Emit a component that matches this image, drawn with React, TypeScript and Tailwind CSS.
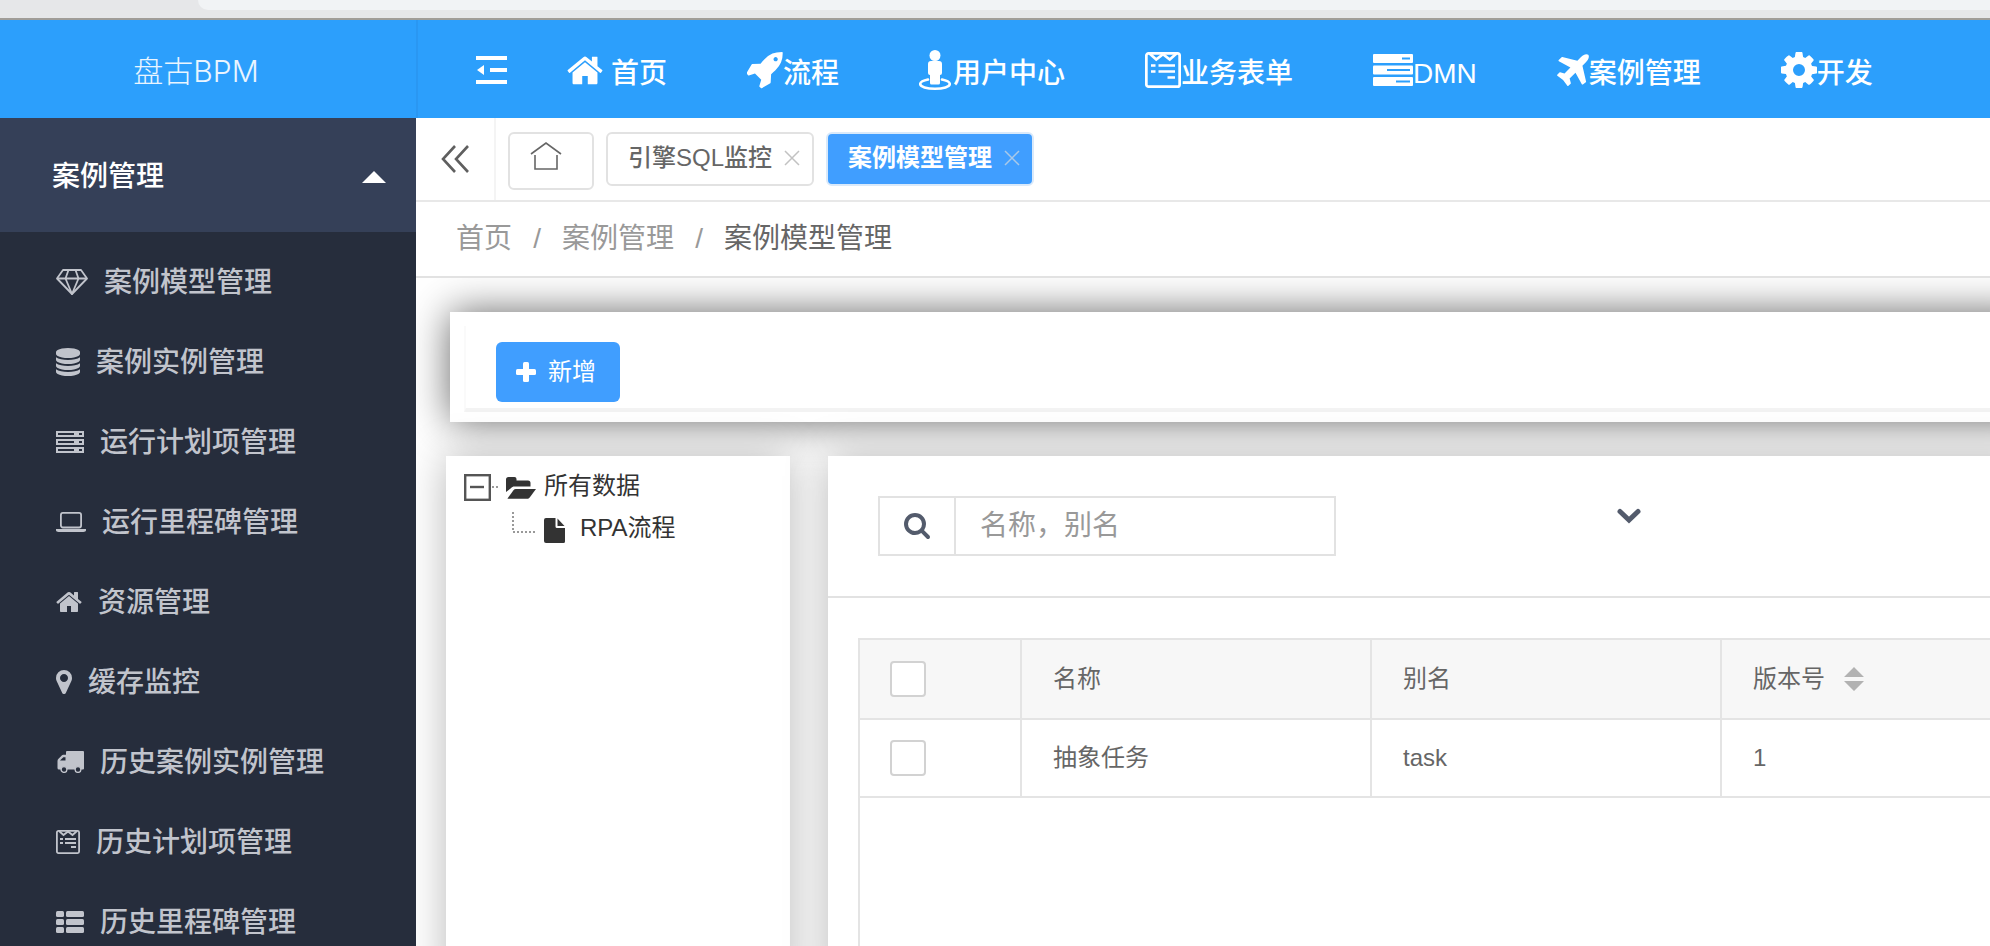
import { useState } from 'react'
import type { ReactNode } from 'react'

const HOME_PATH =
  'M1472 992v480q0 26-19 45t-45 19h-384v-384h-256v384h-384q-26 0-45-19t-19-45v-480q0-1 .5-3t.5-3l575-474 575 474q1 2 1 6zm223-69l-62 74q-8 9-21 11h-3q-13 0-21-7l-692-577-692 577q-12 8-24 7-13-2-21-11l-62-74q-8-10-7-23.5t11-21.5l719-599q32-26 76-26t76 26l244 204v-195q0-14 9-23t23-9h192q14 0 23 9t9 23v408l219 182q10 8 11 21.5t-7 23.5z'

interface IconProps {
  className?: string
}

function HomeIcon({ className }: IconProps) {
  return (
    <svg className={className} viewBox="64 256 1664 1280" fill="currentColor" aria-hidden="true">
      <path d={HOME_PATH} />
    </svg>
  )
}

function RocketIcon({ className }: IconProps) {
  return (
    <svg className={className} viewBox="62 126 1604 1668" fill="currentColor" aria-hidden="true">
      <path d="M1440 448q0-40-28-68t-68-28-68 28-28 68 28 68 68 28 68-28 28-68zm224-288q0 249-75.5 430.5t-253.5 360.5q-81 80-195 176l-20 379q-2 16-16 26l-384 224q-7 4-16 4-12 0-23-9l-64-64q-13-14-8-32l85-276-281-281-276 85q-3 1-9 1-14 0-23-9l-64-64q-17-19-5-39l224-384q10-14 26-16l379-20q96-114 176-195 188-187 358-258t431-71q14 0 24 9.5t10 22.5z" />
    </svg>
  )
}

function PersonIcon({ className }: IconProps) {
  return (
    <svg className={className} viewBox="0 0 32 40" fill="currentColor" aria-hidden="true">
      <circle cx="16" cy="5.5" r="5.5" />
      <path d="M12 11h8a3 3 0 0 1 3 3v9a2 2 0 0 1-2 2v8a1.5 1.5 0 0 1-1.500 1.500h-7A1.500 1.500 0 0 1 11 33v-8a2 2 0 0 1-2-2v-9a3 3 0 0 1 3-3z" />
      <path d="M9 29.500C4 30.500 1.200 32 1.200 34c0 2.800 6.500 4.700 14.800 4.700s14.800-1.900 14.800-4.700c0-2-2.800-3.500-7.800-4.500" fill="none" stroke="currentColor" strokeWidth="2.600" strokeLinecap="round" />
    </svg>
  )
}

function FormIcon({ className }: IconProps) {
  return (
    <svg className={className} viewBox="0 0 24 24" fill="none" stroke="currentColor" strokeWidth="1.800" aria-hidden="true">
      <rect x="0.900" y="0.900" width="22.200" height="22.200" rx="1.500" />
      <path d="M3 1l4.500 4L12 1.500 16.500 5 21 1" />
      <path d="M4 9h3M9 9h11M4 13h3M9 13h11M15 17h5" />
    </svg>
  )
}

function ServerIcon({ className }: IconProps) {
  return (
    <svg className={className} viewBox="0 0 40 32" aria-hidden="true">
      <g fill="currentColor">
        <rect width="40" height="9" rx="1" />
        <rect y="11.500" width="40" height="9" rx="1" />
        <rect y="23" width="40" height="9" rx="1" />
      </g>
      <g className="fill-[#2c9ffc]">
        <rect x="29" y="3.500" width="8" height="2" />
        <rect x="14" y="15" width="23" height="2" />
        <rect x="23" y="26.500" width="14" height="2" />
      </g>
    </svg>
  )
}

function PlaneIcon({ className }: IconProps) {
  return (
    <svg className={className} viewBox="190 124 1410 1410" fill="currentColor" aria-hidden="true">
      <path d="M1568 160q44 52 12 148t-108 172l-161 161 160 696q5 19-12 33l-128 96q-7 6-19 6-4 0-7-1-15-3-21-16l-279-508-259 259 53 194q5 17-8 31l-96 96q-9 9-23 9h-2q-15-2-24-13l-189-252-252-189q-11-7-13-23-1-13 9-25l96-97q9-9 23-9 6 0 8 1l194 53 259-259-508-279q-14-8-17-24-2-16 9-27l128-128q14-13 30-8l665 159 160-160q76-76 172-108t148 12z" />
    </svg>
  )
}

function GearIcon({ className }: IconProps) {
  return (
    <svg className={className} viewBox="128 128 1536 1536" fill="currentColor" aria-hidden="true">
      <path d="M1152 896q0-106-75-181t-181-75-181 75-75 181 75 181 181 75 181-75 75-181zm512-109v222q0 12-8 23t-20 13l-185 28q-19 54-39 91 35 50 107 138 10 12 10 25t-9 23q-27 37-99 108t-94 71q-12 0-26-9l-138-108q-44 23-91 38-16 136-29 186-7 28-36 28h-222q-14 0-24.5-8.5t-11.5-21.5l-28-184q-49-16-90-37l-141 107q-10 9-25 9-14 0-25-11-126-114-165-168-7-10-7-23 0-12 8-23 15-21 51-66.5t54-70.5q-27-50-41-99l-183-27q-13-2-21-12.5t-8-23.5v-222q0-12 8-23t19-13l186-28q14-46 39-92-40-57-107-138-10-12-10-24 0-10 9-23 26-36 98.5-107.5t94.5-71.5q13 0 26 10l138 107q44-23 91-38 16-136 29-186 7-28 36-28h222q14 0 24.5 8.500t11.500 21.500l28 184q49 16 90 37l142-107q9-9 24-9 13 0 25 10 129 119 165 170 7 8 7 22 0 12-8 23-15 21-51 66.5t-54 70.5q26 50 41 98l183 28q13 2 21 12.5t8 23.5z" />
    </svg>
  )
}

function DiamondIcon({ className }: IconProps) {
  return (
    <svg className={className} viewBox="0 0 32 26" fill="none" stroke="currentColor" strokeWidth="1.800" strokeLinejoin="round" aria-hidden="true">
      <path d="M7 1h18l6 8.500L16 25 1 9.500z" />
      <path d="M1 9.500h30M12.500 1L9.500 9.500 16 25l6.500-15.500L19.500 1" />
    </svg>
  )
}

function DatabaseIcon({ className }: IconProps) {
  return (
    <svg className={className} viewBox="128 0 1536 1792" fill="currentColor" aria-hidden="true">
      <path d="M896 768q237 0 443-43t325-127v170q0 69-103 128t-280 93.5-385 34.5-385-34.5-280-93.5-103-128v-170q119 84 325 127t443 43zm0 768q237 0 443-43t325-127v170q0 69-103 128t-280 93.5-385 34.5-385-34.5-280-93.5-103-128v-170q119 84 325 127t443 43zm0-384q237 0 443-43t325-127v170q0 69-103 128t-280 93.5-385 34.5-385-34.5-280-93.5-103-128v-170q119 84 325 127t443 43zm0-1152q208 0 385 34.5t280 93.5 103 128v128q0 69-103 128t-280 93.5-385 34.5-385-34.5-280-93.5-103-128v-128q0-69 103-128t280-93.5 385-34.5z" />
    </svg>
  )
}

function RackIcon({ className }: IconProps) {
  return (
    <svg className={className} viewBox="0 0 28 22" aria-hidden="true">
      <g fill="currentColor">
        <rect width="28" height="6" />
        <rect y="8" width="28" height="6" />
        <rect y="16" width="28" height="6" />
      </g>
      <g className="fill-[#262d3c]">
        <rect x="2" y="2" width="16" height="2" />
        <rect x="2" y="10" width="16" height="2" />
        <rect x="2" y="18" width="16" height="2" />
        <rect x="23" y="2" width="3" height="2" />
        <rect x="23" y="10" width="3" height="2" />
        <rect x="23" y="18" width="3" height="2" />
      </g>
    </svg>
  )
}

function LaptopIcon({ className }: IconProps) {
  return (
    <svg className={className} viewBox="0 0 30 20" aria-hidden="true">
      <rect x="4.900" y="0.900" width="20.200" height="14.600" rx="2" fill="none" stroke="currentColor" strokeWidth="1.800" />
      <path d="M0 17h30v1.300c0 1-1.200 1.700-2.600 1.700H2.600C1.200 20 0 19.300 0 18.300z" fill="currentColor" />
    </svg>
  )
}

function MarkerIcon({ className }: IconProps) {
  return (
    <svg className={className} viewBox="384 128 1024 1536" fill="currentColor" aria-hidden="true">
      <path d="M1152 640q0-106-75-181t-181-75-181 75-75 181 75 181 181 75 181-75 75-181zm256 0q0 109-33 179l-364 774q-16 33-47.5 52t-67.5 19-67.5-19-46.5-52l-365-774q-33-70-33-179 0-212 150-362t362-150 362 150 150 362z" />
    </svg>
  )
}

function TruckIcon({ className }: IconProps) {
  return (
    <svg className={className} viewBox="0 0 28 22" aria-hidden="true">
      <path d="M11 0h16a1 1 0 0 1 1 1v16.500a1 1 0 0 1-1 1H3a1.500 1.500 0 0 1-1.500-1.500v-7c0-1 .3-1.600 1-2.300l3-3C6.200 4 6.800 3.800 7.800 3.800H10V1a1 1 0 0 1 1-1z" fill="currentColor" />
      <path d="M4 9.500L7.300 6.200H9.500v3.300z" className="fill-[#262d3c]" />
      <circle cx="8" cy="18.500" r="2.900" className="fill-[#262d3c]" stroke="currentColor" strokeWidth="1.400" />
      <circle cx="22" cy="18.500" r="2.900" className="fill-[#262d3c]" stroke="currentColor" strokeWidth="1.400" />
    </svg>
  )
}

function ThListIcon({ className }: IconProps) {
  return (
    <svg className={className} viewBox="0 0 28 22" fill="currentColor" aria-hidden="true">
      <rect width="8" height="6" rx="1.500" />
      <rect y="8" width="8" height="6" rx="1.500" />
      <rect y="16" width="8" height="6" rx="1.500" />
      <rect x="10" width="18" height="6" rx="1.500" />
      <rect x="10" y="8" width="18" height="6" rx="1.500" />
      <rect x="10" y="16" width="18" height="6" rx="1.500" />
    </svg>
  )
}

function CloseIcon({ className }: IconProps) {
  return (
    <svg className={className} viewBox="0 0 16 16" fill="none" stroke="currentColor" strokeWidth="1.500" aria-hidden="true">
      <path d="M1 1l14 14M15 1L1 15" />
    </svg>
  )
}

interface MenuItem {
  label: string
  icon: ReactNode
}

const topMenus: MenuItem[] = [
  { label: '首页', icon: <HomeIcon className="mr-2 h-[29px] w-9" /> },
  { label: '流程', icon: <RocketIcon className="h-[37px] w-9" /> },
  { label: '用户中心', icon: <PersonIcon className="mr-0.5 h-10 w-8" /> },
  { label: '业务表单', icon: <FormIcon className="size-9" /> },
  { label: 'DMN', icon: <ServerIcon className="h-8 w-10" /> },
  { label: '案例管理', icon: <PlaneIcon className="size-8" /> },
  { label: '开发', icon: <GearIcon className="size-9" /> },
]

const sideMenus: MenuItem[] = [
  { label: '案例模型管理', icon: <DiamondIcon className="h-[26px] w-8" /> },
  { label: '案例实例管理', icon: <DatabaseIcon className="h-7 w-6" /> },
  { label: '运行计划项管理', icon: <RackIcon className="h-[22px] w-7" /> },
  { label: '运行里程碑管理', icon: <LaptopIcon className="h-5 w-[30px]" /> },
  { label: '资源管理', icon: <HomeIcon className="h-5 w-[26px]" /> },
  { label: '缓存监控', icon: <MarkerIcon className="h-6 w-4" /> },
  { label: '历史案例实例管理', icon: <TruckIcon className="h-[22px] w-7" /> },
  { label: '历史计划项管理', icon: <FormIcon className="size-6" /> },
  { label: '历史里程碑管理', icon: <ThListIcon className="h-[22px] w-7" /> },
]

const rows = [{ name: '抽象任务', alias: 'task', version: 1 }]

const checkboxClass = 'block size-9 appearance-none rounded border-2 border-[#d2d2d2] bg-white checked:border-[#409eff] checked:bg-[#409eff]'

function TopBar() {
  return (
    <header className="flex h-[98px] shrink-0 bg-[#2c9ffc] text-white">
      <div className="flex w-[418px] shrink-0 items-center justify-center border-r-2 border-[#2a97f2] pt-1 pr-6 font-['Inter','Noto_Sans_CJK_SC',sans-serif] text-[30px] font-light text-white/90">
        盘古BPM
      </div>
      <nav className="flex flex-1 items-center pt-0.5 pl-[58px]">
        <button type="button" className="mr-[60px] shrink-0" aria-label="收起菜单">
          <svg className="h-7 w-[31px]" viewBox="0 0 31 28" fill="currentColor" aria-hidden="true">
            <rect width="31" height="4" />
            <rect x="14" y="12" width="17" height="4" />
            <rect y="24" width="31" height="4" />
            <path d="M1 14l7-5v10z" />
          </svg>
        </button>
        <ul className="flex gap-20">
          {topMenus.map((menu) => (
            <li key={menu.label}>
              <a href="#" className="flex items-center whitespace-nowrap text-[28px] leading-10 font-medium">
                {menu.icon}
                <span className="pt-2">{menu.label}</span>
              </a>
            </li>
          ))}
        </ul>
      </nav>
    </header>
  )
}

function SideBar() {
  return (
    <aside className="w-[416px] shrink-0 overflow-hidden bg-[#262d3c]">
      <button type="button" className="flex h-[114px] w-full items-center justify-between bg-[#354058] pt-1 pr-[30px] pl-[52px] text-[28px] font-medium text-white">
        案例管理
        <svg className="h-3 w-6" viewBox="0 0 24 12" fill="currentColor" aria-hidden="true">
          <path d="M12 0l12 12H0z" />
        </svg>
      </button>
      <ul className="pt-2.5">
        {sideMenus.map((menu) => (
          <li key={menu.label}>
            <a href="#" className="flex h-20 items-center gap-4 pl-14 text-[28px] font-medium text-[#c1c4cc]">
              {menu.icon}
              <span className="pt-0.5">{menu.label}</span>
            </a>
          </li>
        ))}
      </ul>
    </aside>
  )
}

function TabBar() {
  return (
    <div className="flex h-[84px] shrink-0 items-start border-b-2 border-[#e8e8e8]">
      <button type="button" className="flex h-full w-20 items-center justify-center border-r-2 border-[#f4f4f4] text-[#5f5f5f]" aria-label="向左滚动">
        <svg className="h-7 w-[29px]" viewBox="0 0 29 28" fill="none" stroke="currentColor" strokeWidth="2.600" aria-hidden="true">
          <path d="M14 1L2 14l12 13M27 1L15 14l12 13" />
        </svg>
      </button>
      <div className="flex items-start gap-3 pt-3.5 pl-3">
        <button type="button" className="flex h-[58px] w-[86px] justify-start rounded-md border-2 border-[#e2e2e2] pt-2 pl-5 text-[#666]" aria-label="首页">
          <svg className="h-7 w-8" viewBox="0 0 32 28" fill="none" stroke="currentColor" strokeWidth="1.600" aria-hidden="true">
            <path d="M1 12L16 1l15 11M5 13v14h22V13" />
          </svg>
        </button>
        <div className="flex h-[54px] items-center gap-3 rounded-md border-2 border-[#e2e2e2] pr-3 pb-0.5 pl-5 text-2xl font-medium text-[#666]">
          引擎SQL监控
          <button type="button" aria-label="关闭引擎SQL监控">
            <CloseIcon className="size-4 text-[#c2c2c2]" />
          </button>
        </div>
        <div className="flex h-[54px] items-center gap-3 rounded-md border-2 border-[#d9e9fa] bg-[#409eff] pr-3 pb-0.5 pl-5 text-2xl font-bold text-white">
          案例模型管理
          <button type="button" aria-label="关闭案例模型管理">
            <CloseIcon className="size-4 text-[#a9c9e8]" />
          </button>
        </div>
      </div>
    </div>
  )
}

function TreePanel() {
  return (
    <section className="w-[344px] shrink-0 bg-white pt-3.5 pl-[18px] text-2xl leading-8 text-[#333] shadow-[0_0_40px_#b8b8b8]">
      <div className="flex items-center">
        <svg className="h-8 w-[72px]" viewBox="0 0 72 32" aria-hidden="true">
          <rect x="1.200" y="5.200" width="24.600" height="24.600" fill="none" stroke="#555" strokeWidth="2.400" />
          <path d="M6 17h14" stroke="#555" strokeWidth="2.400" />
          <path d="M28 17h8" stroke="#999" strokeWidth="2" strokeDasharray="2 2" />
          <path d="M42 22V9.500A2.500 2.500 0 0 1 44.500 7h6a2 2 0 0 1 2 2v1.500H64a2.500 2.500 0 0 1 2.500 2.500v3.500H50.500c-1.500 0-2.700.6-3.600 1.700z" fill="#333" />
          <path d="M43.500 28.500l6-8.300c.6-.8 1.300-1.200 2.300-1.200H72l-6.300 8.500c-.7.900-1.500 1.300-2.500 1.300H44.500c-.6 0-1-.1-1-.3z" fill="#333" />
        </svg>
        <span className="pl-2">所有数据</span>
      </div>
      <div className="flex items-center pt-2.5 pl-12">
        <svg className="h-8 w-[54px]" viewBox="0 0 54 32" aria-hidden="true">
          <path d="M1 0V20H24" fill="none" stroke="#999" strokeWidth="2" strokeDasharray="2 2" />
          <path d="M34 6h9.500v8.500a1.500 1.500 0 0 0 1.500 1.500H53v13.500a1.500 1.500 0 0 1-1.500 1.500H34a2 2 0 0 1-2-2V8a2 2 0 0 1 2-2z" fill="#333" />
          <path d="M45.500 6.500L52.500 14H45.500z" fill="#333" />
        </svg>
        <span className="pl-3.5">RPA流程</span>
      </div>
    </section>
  )
}

function DataPanel() {
  return (
    <section className="-mr-10 flex min-w-0 flex-1 flex-col bg-white shadow-[0_0_40px_#b8b8b8]">
      <div className="flex h-[142px] shrink-0 items-start border-b-2 border-[#e2e2e2] pt-10 pl-[50px]">
        <form className="flex h-[60px] w-[458px] border-2 border-[#e2e2e2]" onSubmit={(e) => e.preventDefault()}>
          <button type="submit" className="flex w-[76px] items-center justify-center border-r-2 border-[#e2e2e2] text-[#535b6c]" aria-label="搜索">
            <svg className="size-[26px]" viewBox="64 128 1664 1664" fill="currentColor" aria-hidden="true">
              <path d="M1216 832q0-185-131.5-316.5t-316.5-131.5-316.5 131.5-131.5 316.5 131.5 316.5 316.5 131.5 316.5-131.5 131.5-316.5zm512 832q0 52-38 90t-90 38q-54 0-90-38l-343-342q-179 124-399 124-143 0-273.5-55.5t-225-150-150-225-55.5-273.5 55.5-273.5 150-225 225-150 273.5-55.5 273.5 55.5 225 150 150 225 55.5 273.5q0 220-124 399l343 343q37 37 37 90z" />
            </svg>
          </button>
          <input
            type="text"
            aria-label="名称，别名"
            placeholder="名称，别名"
            className="min-w-0 flex-1 px-6 text-[28px] text-[#333] placeholder:text-[#999] focus:outline-none"
          />
        </form>
        <button type="button" className="mt-3 ml-[280px] text-[#535b6c]" aria-label="展开搜索">
          <svg className="h-4 w-[26px]" viewBox="0 0 26 16" fill="none" stroke="currentColor" strokeWidth="5" strokeLinecap="round" aria-hidden="true">
            <path d="M4 3.500l9 8.500 9-8.500" />
          </svg>
        </button>
      </div>

      <div className="mt-10 ml-[30px] flex-1 border-t-2 border-l-2 border-[#e4e4e4]">
        <table className="w-full table-fixed border-collapse text-left text-2xl text-[#666]">
          <colgroup>
            <col className="w-[161px]" />
            <col className="w-[350px]" />
            <col className="w-[350px]" />
            <col />
          </colgroup>
          <thead className="bg-[#f7f7f7]">
            <tr className="h-[79px] border-b-2 border-[#e4e4e4]">
              <th className="border-r-2 border-[#e4e4e4] pl-[30px]">
                <input type="checkbox" aria-label="全选" className={checkboxClass} />
              </th>
              <th className="border-r-2 border-[#e4e4e4] pl-[31px] font-normal">名称</th>
              <th className="border-r-2 border-[#e4e4e4] pl-[31px] font-normal">别名</th>
              <th className="pl-[31px] font-normal">
                <button type="button" className="flex items-center gap-[19px]">
                  版本号
                  <svg className="h-6 w-5" viewBox="0 0 20 24" fill="#b2b2b2" aria-hidden="true">
                    <path d="M10 0l10 10H0zM10 24L0 14h20z" />
                  </svg>
                </button>
              </th>
            </tr>
          </thead>
          <tbody>
            {rows.map((row) => (
              <tr key={row.alias} className="h-[78px] border-b-2 border-[#e4e4e4]">
                <td className="border-r-2 border-[#e4e4e4] pl-[30px]">
                  <input type="checkbox" aria-label={`选择${row.name}`} className={checkboxClass} />
                </td>
                <td className="border-r-2 border-[#e4e4e4] pl-[31px]">{row.name}</td>
                <td className="border-r-2 border-[#e4e4e4] pl-[31px]">{row.alias}</td>
                <td className="pl-[31px]">{row.version}</td>
              </tr>
            ))}
          </tbody>
        </table>
      </div>
    </section>
  )
}

export default function App() {
  const [crumbs] = useState(['首页', '案例管理', '案例模型管理'])

  return (
    <div className="flex h-screen flex-col overflow-hidden bg-white font-['Liberation_Sans','Noto_Sans_CJK_SC',sans-serif]">
      {/* 浏览器地址栏下沿 */}
      <div className="flex h-5 shrink-0 border-b-2 border-[#a09d98] bg-[#e6e7e9] pl-[198px]">
        <div className="h-2.5 flex-1 rounded-bl-[18px] bg-[#f1f3f5]" />
      </div>

      <TopBar />

      <div className="flex min-h-0 flex-1">
        <SideBar />

        <main className="flex min-w-0 flex-1 flex-col">
          <TabBar />

          <nav className="flex h-[76px] shrink-0 items-center border-b-2 border-[#e2e2e2] pl-10 text-[28px] text-[#999]">
            {crumbs.map((crumb, i) => (
              <div key={crumb} className="flex">
                {i > 0 && <span className="w-[50px] text-center">/</span>}
                <a href="#" className={i === crumbs.length - 1 ? 'text-[#666]' : ''}>
                  {crumb}
                </a>
              </div>
            ))}
          </nav>

          <div className="flex min-h-0 flex-1 flex-col overflow-hidden pt-[34px] pl-[30px]">
            {/* 工具栏 */}
            <div className="-mr-10 ml-1 h-[110px] shrink-0 bg-white pt-3.5 pl-3.5 shadow-[0_0_40px_#666]">
              <div className="h-[86px] border-b-4 border-l-2 border-b-[#f3f3f3] border-l-[#fafafa] pt-4 pl-[30px]">
                <button type="button" className="flex h-[60px] w-[124px] items-center gap-3 rounded-md bg-[#409eff] pl-5 text-2xl text-white">
                  <svg className="size-5" viewBox="0 0 20 20" fill="currentColor" aria-hidden="true">
                    <rect y="7" width="20" height="6" rx="1.500" />
                    <rect x="7" width="6" height="20" rx="1.500" />
                  </svg>
                  新增
                </button>
              </div>
            </div>

            <div className="mt-[34px] -mb-10 flex min-h-0 flex-1 gap-[38px]">
              <TreePanel />
              <DataPanel />
            </div>
          </div>
        </main>
      </div>
    </div>
  )
}
